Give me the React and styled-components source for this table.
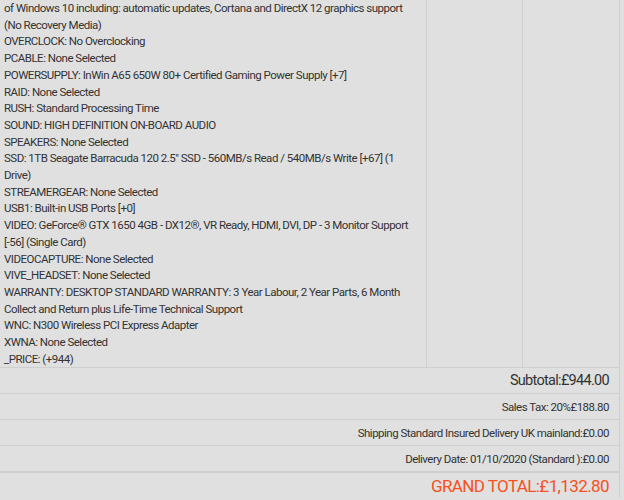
import styled, { createGlobalStyle } from "styled-components";

const GlobalStyle = createGlobalStyle`
    html, body {
        margin: 0;
        padding: 0;
        background: #e0e0e0;
    }
    body {
        font-family: Roboto, "Liberation Sans", sans-serif;
        color: #333;
        width: 624px;
        height: 500px;
        overflow: hidden;
    }
`;

const specs = [
    "of Windows 10 including: automatic updates, Cortana and DirectX 12 graphics support (No Recovery Media)",
    "OVERCLOCK: No Overclocking",
    "PCABLE: None Selected",
    "POWERSUPPLY: InWin A65 650W 80+ Certified Gaming Power Supply [+7]",
    "RAID: None Selected",
    "RUSH: Standard Processing Time",
    "SOUND: HIGH DEFINITION ON-BOARD AUDIO",
    "SPEAKERS: None Selected",
    "SSD: 1TB Seagate Barracuda 120 2.5\" SSD - 560MB/s Read / 540MB/s Write [+67] (1 Drive)",
    "STREAMERGEAR: None Selected",
    "USB1: Built-in USB Ports [+0]",
    "VIDEO: GeForce® GTX 1650 4GB - DX12®, VR Ready, HDMI, DVI, DP - 3 Monitor Support [-56] (Single Card)",
    "VIDEOCAPTURE: None Selected",
    "VIVE_HEADSET: None Selected",
    "WARRANTY: DESKTOP STANDARD WARRANTY: 3 Year Labour, 2 Year Parts, 6 Month Collect and Return plus Life-Time Technical Support",
    "WNC: N300 Wireless PCI Express Adapter",
    "XWNA: None Selected",
    "_PRICE: (+944)",
];

const totals = [
    { label: "Subtotal:£944.00", kind: "sub" },
    { label: "Sales Tax: 20%£188.80" },
    { label: "Shipping Standard Insured Delivery UK mainland:£0.00" },
    { label: "Delivery Date: 01/10/2020 (Standard ):£0.00" },
    { label: "GRAND TOTAL:£1,132.80", kind: "grand" },
];

export default function App() {
    return (
        <>
            <GlobalStyle />
            <StyledCart>
                <StyledItemRow>
                    <StyledSpecCell>
                        {specs.map((line) => (
                            <StyledSpecLine key={line}>{line}</StyledSpecLine>
                        ))}
                    </StyledSpecCell>
                    <StyledEmptyCell />
                    <StyledEmptyCell />
                </StyledItemRow>
                {totals.map((row) => (
                    <StyledTotalRow key={row.label} $kind={row.kind}>
                        {row.label}
                    </StyledTotalRow>
                ))}
            </StyledCart>
        </>
    );
}

const StyledCart = styled.div`
    width: 620px;
    border-right: 1px solid #cfcfcf;
    box-sizing: border-box;
`;

const StyledItemRow = styled.div`
    display: grid;
    grid-template-columns: 427px 96px 96px;
    border-bottom: 1px solid #cfcfcf;
`;

const StyledSpecCell = styled.div`
    padding: 0 4px;
    font-size: 11.5px;
    letter-spacing: -0.5px;
    line-height: 16.7px;
    border-right: 1px solid #cfcfcf;
`;

const StyledSpecLine = styled.div``;

const StyledEmptyCell = styled.div`
    border-right: 1px solid #cfcfcf;
    &:last-child {
        border-right: none;
    }
`;

const sizes = { sub: "14.5px", grand: "17px" };
const spacings = { sub: "-0.7px", grand: "-0.6px" };

const StyledTotalRow = styled.div`
    display: flex;
    align-items: center;
    justify-content: flex-end;
    box-sizing: border-box;
    padding: 0 10px;
    height: 26px;
    font-size: ${(p) => sizes[p.$kind] || "11.5px"};
    letter-spacing: ${(p) => spacings[p.$kind] || "-0.5px"};
    color: ${(p) => (p.$kind === "grand" ? "#f4511e" : "#333")};
    border-bottom: ${(p) =>
        p.$kind === "grand" ? "none" : "1px solid #cfcfcf"};
    border-top: ${(p) => (p.$kind === "grand" ? "1px solid #cfcfcf" : "none")};
`;
